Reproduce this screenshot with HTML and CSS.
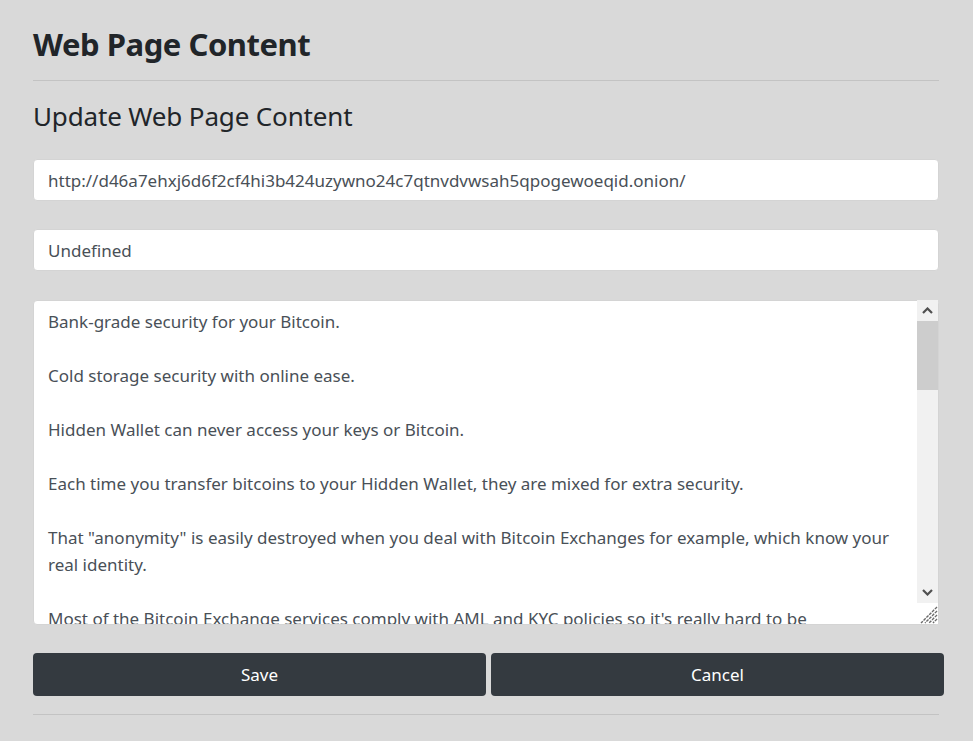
FILE: index.html
```html
<!DOCTYPE html>
<html lang="en">
<head>
<meta charset="utf-8">
<title>Web Page Content</title>
<link rel="stylesheet" href="styles.css">
</head>
<body>
<main class="page">
  <h1 class="title">Web Page Content</h1>
  <hr class="rule">
  <h2 class="subtitle">Update Web Page Content</h2>
  <form class="form">
    <input class="field" type="text" value="http://d46a7ehxj6d6f2cf4hi3b424uzywno24c7qtnvdvwsah5qpogewoeqid.onion/">
    <input class="field" type="text" value="Undefined">
    <div class="area-wrap">
      <textarea class="area">Bank-grade security for your Bitcoin.

Cold storage security with online ease.

Hidden Wallet can never access your keys or Bitcoin.

Each time you transfer bitcoins to your Hidden Wallet, they are mixed for extra security.

That "anonymity" is easily destroyed when you deal with Bitcoin Exchanges for example, which know your real identity.

Most of the Bitcoin Exchange services comply with AML and KYC policies so it's really hard to be anonymous when you buy or sell bitcoins.

Hidden Wallet mixes your coins so nobody can trace them back to you.

Your wallet is protected by multi-signature technology and stored offline.

Instant transfers between Hidden Wallet users, free of charge.

Secure, private and always available.</textarea>
      <div class="scrollbar" aria-hidden="true">
        <div class="sb-btn">
          <svg width="11" height="7" viewBox="0 0 11 7"><path d="M1 6 L5.5 1.5 L10 6" fill="none" stroke="#505050" stroke-width="2.2"/></svg>
        </div>
        <div class="sb-track"><div class="sb-thumb"></div></div>
        <div class="sb-btn">
          <svg width="11" height="7" viewBox="0 0 11 7"><path d="M1 1 L5.5 5.5 L10 1" fill="none" stroke="#505050" stroke-width="2.2"/></svg>
        </div>
        <div class="sb-corner">
          <svg width="21" height="21" viewBox="0 0 21 21">
            <path d="M20 4 L4 20 M20 8 L8 20 M20 12 L12 20 M20 16 L16 20" stroke="#6a6a6a" stroke-width="1.4" stroke-dasharray="3 1"/>
          </svg>
        </div>
      </div>
    </div>
    <div class="actions">
      <button class="btn" type="button">Save</button>
      <button class="btn" type="button">Cancel</button>
    </div>
  </form>
  <hr class="rule rule-bottom">
</main>
</body>
</html>
```

FILE: styles.css
```css
* { box-sizing: border-box; }

html, body {
  margin: 0;
  padding: 0;
  background: #d9d9d9;
}

body {
  font-family: "Noto Sans", "Open Sans", "Liberation Sans", sans-serif;
  color: #212529;
  font-size: 18px;
}

.page {
  width: 906px;
  margin-left: 33px;
  padding-top: 25px;
}

.title {
  margin: 0;
  font-size: 31px;
  line-height: 38px;
  font-weight: 700;
  letter-spacing: -0.45px;
}

.rule {
  margin: 17px 0 0;
  border: 0;
  border-top: 1px solid #c3c3c3;
  height: 0;
}

.subtitle {
  margin: 19px 0 0;
  font-size: 26px;
  line-height: 32px;
  font-weight: 400;
  letter-spacing: -0.15px;
}

.form {
  display: flex;
  flex-direction: column;
  margin-top: 27px;
}

.field {
  height: 42px;
  padding: 0 14px;
  border: 1px solid #d4d4d4;
  border-radius: 4px;
  background: #fff;
  font-family: inherit;
  font-size: 17px;
  color: #495057;
  margin-bottom: 28px;
  outline: none;
}

.area-wrap {
  position: relative;
  height: 325px;
  margin-top: 1px;
}

.area {
  display: block;
  width: 100%;
  height: 100%;
  padding: 7px 35px 7px 14px;
  border: 1px solid #d4d4d4;
  border-radius: 4px;
  background: #fff;
  font-family: inherit;
  font-size: 17px;
  line-height: 27px;
  color: #495057;
  resize: none;
  overflow: hidden;
  outline: none;
}

.scrollbar {
  position: absolute;
  top: 0;
  right: 1px;
  bottom: 1px;
  width: 21px;
  display: flex;
  flex-direction: column;
}

.sb-btn {
  height: 21px;
  background: #f1f1f1;
  display: flex;
  align-items: center;
  justify-content: center;
}

.sb-track {
  flex: 1;
  background: #f1f1f1;
}

.sb-thumb {
  height: 69px;
  background: #cdcdcd;
}

.sb-corner {
  height: 21px;
  background: #fff;
}

.sb-corner svg { display: block; }

.actions {
  display: grid;
  grid-template-columns: 1fr 1fr;
  gap: 5px;
  margin-top: 28px;
  margin-right: -5px;
}

.btn {
  height: 43px;
  border: 0;
  border-radius: 4px;
  background: #343a40;
  color: #fff;
  font-family: inherit;
  font-size: 17px;
  cursor: pointer;
}

.rule-bottom {
  margin-top: 18px;
}
```
